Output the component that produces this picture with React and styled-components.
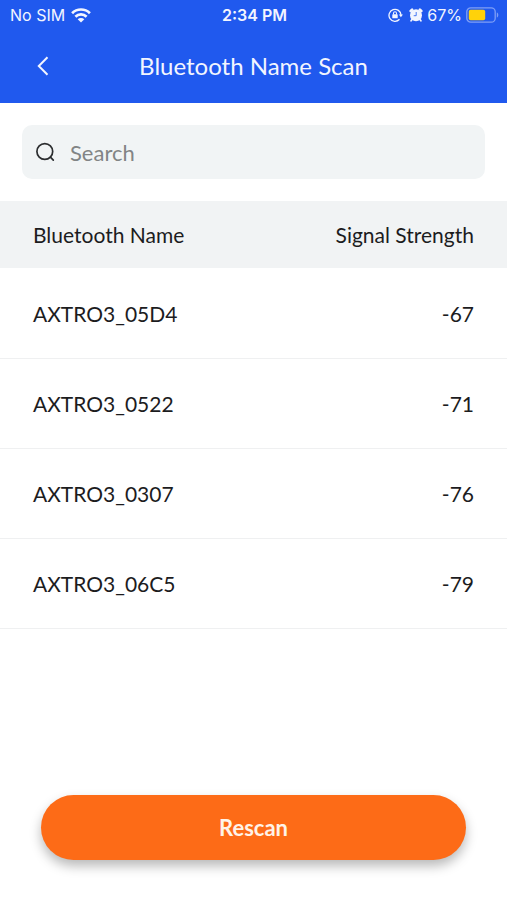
import { useState } from "react";
import styled, { createGlobalStyle } from "styled-components";

const GlobalStyle = createGlobalStyle`
    * {
        box-sizing: border-box;
    }

    body {
        margin: 0;
        background-color: white;
        color: #1c1c1e;
        font-family: Lato, sans-serif;
        font-size: 22px;
    }
`;

const Container = styled.div`
    min-height: 100vh;
    display: flex;
    flex-direction: column;
`;

const Header = styled.header`
    background-color: #2059ee;
    color: #f2f5ff;
`;

const StatusBar = styled.div`
    height: 30px;
    padding: 0 8px 0 10px;
    display: grid;
    grid-template-columns: 1fr auto 1fr;
    align-items: center;
    font-family: Inter, sans-serif;
    font-size: 16px;
    line-height: 20px;
`;

const StatusGroup = styled.div`
    display: flex;
    align-items: center;
    gap: ${({ $gap }) => $gap}px;
    justify-content: ${({ $end }) => ($end ? "flex-end" : "flex-start")};
    white-space: nowrap;
`;

const Time = styled.span`
    font-weight: 600;
`;

const NavBar = styled.div`
    height: 73px;
    padding: 0 23px 2px;
    display: grid;
    grid-template-columns: 40px 1fr 40px;
    align-items: center;
`;

const BackButton = styled.button`
    width: 40px;
    height: 40px;
    padding: 0;
    border: none;
    background: none;
    color: inherit;
    display: flex;
    align-items: center;
    justify-content: center;
    cursor: pointer;
`;

const Title = styled.h1`
    margin: 0;
    font-size: 24px;
    font-weight: 400;
    line-height: 32px;
    text-align: center;
`;

const Main = styled.main`
    flex: 1;
    display: flex;
    flex-direction: column;
`;

const SearchBox = styled.label`
    height: 54px;
    margin: 22px;
    padding: 0 12px;
    border-radius: 10px;
    background-color: #f1f4f5;
    display: flex;
    align-items: center;
    gap: 14px;
`;

const SearchInput = styled.input`
    flex: 1;
    min-width: 0;
    padding: 0;
    border: none;
    outline: none;
    background: none;
    color: inherit;
    font: inherit;

    &::placeholder {
        color: #828485;
        opacity: 1;
    }
`;

const Table = styled.table`
    width: 100%;
    border-collapse: collapse;
    font-size: 21px;
    line-height: 28px;
`;

const HeadRow = styled.tr`
    height: 67px;
    background-color: #f1f3f4;
`;

const Row = styled.tr`
    height: 90px;
    border-bottom: 1px solid #eff0f1;
`;

const HeadCell = styled.th`
    padding: 0 33px;
    font-weight: 400;
    text-align: ${({ $align }) => $align || "left"};
`;

const Cell = styled.td`
    padding: 2px 33px 0;
    text-align: ${({ $align }) => $align || "left"};
`;

const Footer = styled.footer`
    padding: 40px 41px;
`;

const RescanButton = styled.button`
    width: 100%;
    height: 65px;
    border: none;
    border-radius: 33px;
    background-color: #fd6b17;
    box-shadow: 0 6px 12px rgba(0, 0, 0, 0.28);
    color: #fff3e8;
    font-family: inherit;
    font-size: 22px;
    font-weight: 700;
    cursor: pointer;
`;

const WifiIcon = () => (
    <svg width="20" height="15" viewBox="0 0 20 15" fill="none" stroke="currentColor" strokeWidth="2.7" aria-hidden="true">
        <path d="M1.1 5.2a12.6 12.6 0 0 1 17.8 0" />
        <path d="M4.4 8.7a7.9 7.9 0 0 1 11.2 0" />
        <path d="M10 14.6 6.7 11.3a4.7 4.7 0 0 1 6.6 0Z" fill="currentColor" stroke="none" />
    </svg>
);

const RotationLockIcon = () => (
    <svg width="15" height="14" viewBox="0 0 15 14" fill="none" stroke="currentColor" aria-hidden="true">
        <path d="M11.5 11.3A6 6 0 1 1 13 7" strokeWidth="1.3" />
        <path d="M10.9 6.4h4L12.9 9.2Z" fill="currentColor" stroke="none" />
        <rect x="4.3" y="6.3" width="5.4" height="4" rx="0.6" fill="currentColor" stroke="none" />
        <path d="M5.5 6.6V5.2a1.5 1.5 0 0 1 3 0v1.4" strokeWidth="1.1" />
    </svg>
);

const AlarmIcon = () => (
    <svg width="14" height="14" viewBox="0 0 14 14" aria-hidden="true">
        <circle cx="7" cy="7.2" r="6" fill="currentColor" />
        <g stroke="currentColor" strokeWidth="2.6" strokeLinecap="round">
            <path d="M1.7 3 3.1 1.6M12.3 3 10.9 1.6" />
            <path d="m3 11.5-.9 1.2M11 11.5l.9 1.2" strokeWidth="1.8" />
        </g>
        <path d="M7.2 4v3.7H4.7" fill="none" stroke="#2059ee" strokeWidth="0.8" />
    </svg>
);

const BatteryIcon = () => (
    <svg width="33" height="16" viewBox="0 0 33 16" aria-hidden="true">
        <rect x="0.8" y="0.8" width="28.4" height="14.4" rx="4" fill="none" stroke="#7f9ff6" strokeWidth="1.3" />
        <rect x="2.8" y="2.8" width="16.4" height="10.4" rx="1.8" fill="#ffd20a" />
        <path d="M30.8 5.5c2 .6 2 4.4 0 5Z" fill="#7f9ff6" />
    </svg>
);

const BackIcon = () => (
    <svg width="12" height="20" viewBox="0 0 12 20" fill="none" stroke="currentColor" strokeWidth="2" aria-hidden="true">
        <path d="M10.5 1.2 1.8 10l8.700 8.800" />
    </svg>
);

const SearchIcon = () => (
    <svg width="22" height="22" viewBox="0 0 22 22" fill="none" stroke="#2b2d2f" strokeWidth="1.7" strokeLinecap="round" aria-hidden="true">
        <circle cx="10.8" cy="10.5" r="7.900" />
        <path d="m16.400 16.200 2.900 2.900" />
    </svg>
);

const devices = [
    { name: "AXTRO3_05D4", signal: -67 },
    { name: "AXTRO3_0522", signal: -71 },
    { name: "AXTRO3_0307", signal: -76 },
    { name: "AXTRO3_06C5", signal: -79 },
];

const App = () => {
    const [query, setQuery] = useState("");
    const found = devices.filter((d) => d.name.toLowerCase().includes(query.toLowerCase()));

    return (
        <Container>
            <GlobalStyle />
            <Header>
                <StatusBar>
                    <StatusGroup $gap={6}>
                        <span>No SIM</span>
                        <WifiIcon />
                    </StatusGroup>
                    <Time>2:34 PM</Time>
                    <StatusGroup $gap={4} $end>
                        <StatusGroup $gap={6}>
                            <RotationLockIcon />
                            <AlarmIcon />
                        </StatusGroup>
                        <span>67%</span>
                        <BatteryIcon />
                    </StatusGroup>
                </StatusBar>
                <NavBar>
                    <BackButton type="button" aria-label="Back">
                        <BackIcon />
                    </BackButton>
                    <Title>Bluetooth Name Scan</Title>
                </NavBar>
            </Header>
            <Main>
                <SearchBox>
                    <SearchIcon />
                    <SearchInput
                        type="text"
                        placeholder="Search"
                        aria-label="Search"
                        value={query}
                        onChange={(e) => setQuery(e.target.value)}
                    />
                </SearchBox>
                <Table>
                    <thead>
                        <HeadRow>
                            <HeadCell scope="col">Bluetooth Name</HeadCell>
                            <HeadCell scope="col" $align="right">Signal Strength</HeadCell>
                        </HeadRow>
                    </thead>
                    <tbody>
                        {found.map((device) => (
                            <Row key={device.name}>
                                <Cell>{device.name}</Cell>
                                <Cell $align="right">{device.signal}</Cell>
                            </Row>
                        ))}
                    </tbody>
                </Table>
            </Main>
            <Footer>
                <RescanButton type="button">Rescan</RescanButton>
            </Footer>
        </Container>
    );
};

export default App;
